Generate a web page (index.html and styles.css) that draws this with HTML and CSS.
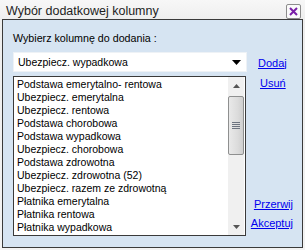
FILE: index.html
```html
<!DOCTYPE html>
<html lang="pl">
<head>
    <meta charset="UTF-8">
    <title>Wybór dodatkowej kolumny</title>
    <link rel="stylesheet" href="styles.css">
</head>
<body>
    <div class="window">
        <div class="titlebar">
            <span class="title">Wybór dodatkowej kolumny</span>
            <span class="close">
                <svg width="9" height="9" viewBox="0 0 9 9">
                    <path d="M1 1 L8 8 M8 1 L1 8" stroke="#7a1fa8" stroke-width="2" />
                </svg>
            </span>
        </div>

        <div class="panel">
            <div class="label">Wybierz kolumnę do dodania :</div>

            <div class="combo-row">
                <div class="combo">
                    <span>Ubezpiecz. wypadkowa</span>
                    <svg width="9" height="5" viewBox="0 0 9 5"><path d="M0 0 H9 L4.5 5 Z" fill="#000" /></svg>
                </div>
                <a href="#" class="link link-add">Dodaj</a>
            </div>

            <div class="list-row">
                <div class="list">
                    <ul class="items">
                        <li>Podstawa emerytalno- rentowa</li>
                        <li>Ubezpiecz. emerytalna</li>
                        <li>Ubezpiecz. rentowa</li>
                        <li>Podstawa chorobowa</li>
                        <li>Podstawa wypadkowa</li>
                        <li>Ubezpiecz. chorobowa</li>
                        <li>Podstawa zdrowotna</li>
                        <li>Ubezpiecz. zdrowotna (52)</li>
                        <li>Ubezpiecz. razem ze zdrowotną</li>
                        <li>Płatnika emerytalna</li>
                        <li>Płatnika rentowa</li>
                        <li>Płatnika wypadkowa</li>
                    </ul>
                    <div class="scrollbar">
                        <div class="arrow">
                            <svg width="7" height="4" viewBox="0 0 7 4"><path d="M0 4 H7 L3.5 0 Z" fill="#555" /></svg>
                        </div>
                        <div class="thumb">
                            <svg width="8" height="7" viewBox="0 0 8 7">
                                <path d="M0 0.5 H8 M0 2.5 H8 M0 4.5 H8 M0 6.5 H8" stroke="#6d7480" stroke-width="1" />
                            </svg>
                        </div>
                        <div class="track"></div>
                        <div class="arrow">
                            <svg width="7" height="4" viewBox="0 0 7 4"><path d="M0 0 H7 L3.5 4 Z" fill="#555" /></svg>
                        </div>
                    </div>
                </div>

                <div class="actions">
                    <a href="#" class="link link-remove">Usuń</a>
                    <div class="bottom-links">
                        <a href="#" class="link">Przerwij</a>
                        <a href="#" class="link">Akceptuj</a>
                    </div>
                </div>
            </div>
        </div>
    </div>
</body>
</html>
```

FILE: styles.css
```css
body {
    margin: 0;
    padding: 0;
    font-family: "Liberation Sans", Arial, sans-serif;
    font-size: 10.5px;
    color: #000;
    background: #f3f3f3;
}

.window {
    width: 305px;
    height: 250px;
    background: linear-gradient(#f7f7f7, #eeeeee 20px, #f3f3f3);
}

.titlebar {
    height: 19px;
    display: flex;
    align-items: center;
    justify-content: space-between;
    padding: 0 4px 0 6px;
}

.title {
    font-size: 12.5px;
    color: #1e1e1e;
    margin-top: 2px;
}

.close {
    width: 13px;
    height: 13px;
    border: 1px solid #8c8c8c;
    border-radius: 2px;
    background: #fafafa;
    display: flex;
    align-items: center;
    justify-content: center;
    margin-top: 3px;
}

.panel {
    margin: 0 2px;
    height: 229px;
    box-sizing: border-box;
    border: 1px solid #3a3a3a;
    background: #d6e4f2;
    padding: 12px 0 0 10px;
}

.label {
    font-size: 10.7px;
    line-height: 13px;
    height: 13px;
}

.combo-row {
    display: flex;
    align-items: center;
    margin-top: 7px;
}

.combo {
    width: 234px;
    height: 20px;
    box-sizing: border-box;
    background: #fff;
    border: 1px solid #eef2f6;
    display: flex;
    align-items: center;
    justify-content: space-between;
    padding: 0 5px 0 4px;
}

.link {
    font-size: 11px;
    color: #0000ee;
    text-decoration: underline;
}

.link-add {
    margin-left: 11px;
    margin-top: 1px;
}

.list-row {
    display: flex;
    margin-top: 4px;
}

.list {
    width: 233px;
    height: 160px;
    box-sizing: border-box;
    border: 1px solid #3a3a3a;
    background: #fff;
    display: flex;
}

.items {
    flex: 1;
    margin: 0;
    padding: 1px 0 0 3px;
    list-style: none;
    line-height: 13px;
    overflow: hidden;
}

.items li {
    white-space: nowrap;
}

.scrollbar {
    width: 16px;
    margin-right: 1px;
    background: #f0f0f0;
    display: flex;
    flex-direction: column;
}

.arrow {
    height: 17px;
    display: flex;
    align-items: center;
    justify-content: center;
}

.thumb {
    height: 59px;
    margin: 2px 0 0 0;
    box-sizing: border-box;
    border: 1px solid #8e8f8f;
    border-radius: 2px;
    background: linear-gradient(90deg, #e9e9e9, #dcdcdc 60%, #cfcfcf);
    display: flex;
    align-items: center;
    justify-content: center;
}

.track {
    flex: 1;
}

.actions {
    flex: 1;
    display: flex;
    flex-direction: column;
    padding-top: 1px;
}

.link-remove {
    margin-left: 14px;
}

.bottom-links {
    margin-top: auto;
    margin-bottom: 7px;
    display: flex;
    flex-direction: column;
    align-items: flex-end;
    gap: 7px;
    padding-right: 9px;
}
```
